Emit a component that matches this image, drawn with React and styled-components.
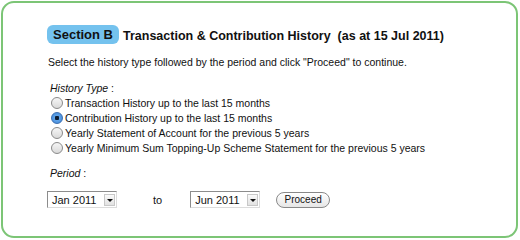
import React, { useState } from "react";
import styled, { createGlobalStyle } from "styled-components";

const GlobalStyle = createGlobalStyle`
  html, body {
    margin: 0;
    padding: 0;
    background: #ffffff;
  }
  body {
    font-family: "Liberation Sans", Arial, sans-serif;
    color: #111;
  }
`;

const historyTypes = [
  "Transaction History up to the last 15 months",
  "Contribution History up to the last 15 months",
  "Yearly Statement of Account for the previous 5 years",
  "Yearly Minimum Sum Topping-Up Scheme Statement for the previous 5 years",
];

const App = () => {
  const [selected, setSelected] = useState(1);

  return (
    <>
      <GlobalStyle />
      <Card>
        <Header>
          <Badge>Section B</Badge>
          <Title>Transaction &amp; Contribution History&nbsp; (as at 15 Jul 2011)</Title>
        </Header>
        <Intro>
          Select the history type followed by the period and click "Proceed" to continue.
        </Intro>
        <Label>
          <em>History Type</em> :
        </Label>
        <RadioList>
          {historyTypes.map((t, i) => (
            <RadioRow key={t} onClick={() => setSelected(i)}>
              <Radio $checked={selected === i} />
              <span>{t}</span>
            </RadioRow>
          ))}
        </RadioList>
        <Label $period>
          <em>Period</em> :
        </Label>
        <PeriodRow>
          <Select>
            <SelectValue>Jan 2011</SelectValue>
            <SelectArrow />
          </Select>
          <ToText>to</ToText>
          <Select>
            <SelectValue>Jun 2011</SelectValue>
            <SelectArrow />
          </Select>
          <Button>Proceed</Button>
        </PeriodRow>
      </Card>
    </>
  );
};

const Card = styled.div`
  box-sizing: border-box;
  margin: 1px 2px 0 1px;
  width: 517px;
  height: 237px;
  border: 2px solid #7cc576;
  border-radius: 13px;
  padding: 22px 0 0 44px;
`;

const Header = styled.div`
  display: flex;
  align-items: center;
  gap: 4px;
`;

const Badge = styled.div`
  background: #74c2ee;
  border-radius: 6px;
  height: 19px;
  width: 72px;
  display: flex;
  align-items: center;
  justify-content: center;
  font-weight: bold;
  font-size: 13px;
  color: #111;
`;

const Title = styled.div`
  font-weight: bold;
  font-size: 12.5px;
  margin-top: 3px;
`;

const Intro = styled.p`
  margin: 12px 0 0 1px;
  font-size: 10.5px;
`;

const Label = styled.div`
  margin: ${(p) => (p.$period ? "12px" : "14px")} 0 0 3px;
  font-size: 10.5px;
  em {
    font-style: italic;
  }
`;

const RadioList = styled.div`
  display: flex;
  flex-direction: column;
  margin-top: 1px;
  padding-left: 4px;
`;

const RadioRow = styled.label`
  display: flex;
  align-items: center;
  gap: 2px;
  height: 15px;
  font-size: 10.5px;
  cursor: pointer;
`;

const Radio = styled.span`
  box-sizing: border-box;
  width: 12px;
  height: 12px;
  border-radius: 50%;
  border: 1px solid ${(p) => (p.$checked ? "#3b6fb0" : "#8a8a8a")};
  background: ${(p) =>
    p.$checked
      ? "radial-gradient(circle, #0d1d33 0 2px, #5fa3e8 2.5px, #3c82d6 100%)"
      : "linear-gradient(#f6f6f6, #d9d9d9)"};
  flex-shrink: 0;
`;

const PeriodRow = styled.div`
  display: flex;
  align-items: center;
  margin-top: 12px;
`;

const Select = styled.div`
  box-sizing: border-box;
  width: 70px;
  height: 17px;
  display: flex;
  align-items: center;
  justify-content: space-between;
  border-top: 1px solid #8c8c8c;
  border-left: 1px solid #8c8c8c;
  border-right: 1px solid #dcdcdc;
  border-bottom: 1px solid #dcdcdc;
  background: #fff;
  font-size: 11px;
`;

const SelectValue = styled.span`
  padding-left: 4px;
`;

const SelectArrow = styled.span`
  box-sizing: border-box;
  width: 11px;
  height: 12px;
  margin-right: 1px;
  background: linear-gradient(#fafafa, #e2e2e2);
  border: 1px solid #c8c8c8;
  position: relative;
  &::after {
    content: "";
    position: absolute;
    left: 2px;
    top: 4px;
    border-left: 3px solid transparent;
    border-right: 3px solid transparent;
    border-top: 3px solid #111;
  }
`;

const ToText = styled.span`
  font-size: 11px;
  margin: 0 28px 0 36px;
`;

const Button = styled.button`
  margin-left: 16px;
  box-sizing: border-box;
  height: 16px;
  width: 54px;
  padding: 0;
  border: 1px solid #888;
  border-radius: 8px;
  background: linear-gradient(#ffffff, #e6e6e6);
  font-family: "Liberation Sans", Arial, sans-serif;
  font-size: 10px;
  color: #111;
  box-shadow: inset 0 1px 0 #fff;
`;

export default App;
